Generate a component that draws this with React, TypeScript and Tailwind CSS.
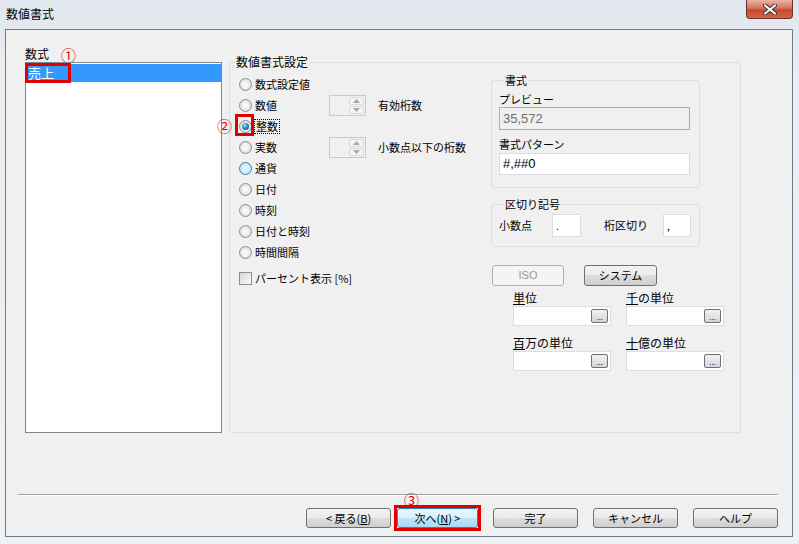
import type { ReactNode } from "react";

const jp = "font-['Noto_Sans_CJK_JP','Liberation_Sans',sans-serif]";

function Radio({ checked = false, hover = false }: { checked?: boolean; hover?: boolean }) {
  return (
    <span
      className={`flex h-[13px] w-[13px] shrink-0 items-center justify-center rounded-full border ${
        hover
          ? "border-[#3c7fb1] bg-[radial-gradient(circle_at_50%_50%,#e2f4fd_25%,#a9dcf6_100%)]"
          : "border-[#8e8f8f] bg-[radial-gradient(circle_at_50%_50%,#f7f7f7_25%,#cfcfcf_100%)]"
      }`}
    >
      {checked && (
        <span className="h-[7px] w-[7px] rounded-full bg-[radial-gradient(circle_at_40%_35%,#a6e4ff_0%,#2a8ad2_45%,#0b3f78_100%)]" />
      )}
    </span>
  );
}

function Btn({
  children,
  className = "",
  variant = "normal",
}: {
  children: ReactNode;
  className?: string;
  variant?: "normal" | "default" | "disabled";
}) {
  const look =
    variant === "default"
      ? "border-[#3c7fb1] bg-[linear-gradient(180deg,#eaf6fd_0%,#d9f0fc_50%,#bee6fd_50%,#a7d9f5_100%)] text-black"
      : variant === "disabled"
        ? "border-[#adb2b5] bg-[#f4f4f4] text-[#9a9a9a]"
        : "border-[#707070] bg-[linear-gradient(180deg,#f2f2f2_0%,#ebebeb_50%,#dddddd_50%,#cfcfcf_100%)] text-black";
  return (
    <div className={`flex h-[20px] items-center justify-center rounded-[3px] border text-[11px] ${look} ${className}`}>
      {children}
    </div>
  );
}

function Spinner() {
  return (
    <div className="flex h-[21px] w-[37px] border border-[#cacaca] bg-[#f0f0f0]">
      <div className="flex-1" />
      <div className="flex w-[17px] flex-col gap-[1px] p-[1px]">
        {[0, 1].map((i) => (
          <div key={i} className="flex flex-1 items-center justify-center rounded-[2px] border border-[#d9d9d9] bg-[#f4f4f4]">
            <svg width="7" height="4" viewBox="0 0 7 4">
              <path d={i === 0 ? "M0 4 L3.5 0 L7 4 Z" : "M0 0 L3.5 4 L7 0 Z"} fill="#a8a8a8" />
            </svg>
          </div>
        ))}
      </div>
    </div>
  );
}

function UnitField({ label }: { label: ReactNode }) {
  return (
    <div className="flex w-[98px] flex-col">
      <div className="h-[14px] text-[12px] leading-[14px]">{label}</div>
      <div className="mt-[1px] flex h-[20px] items-center justify-end border border-[#dcdde3] bg-white pr-[2px]">
        <div className="flex h-[14px] w-[17px] items-end justify-center rounded-[2px] border border-[#707070] bg-[linear-gradient(180deg,#f2f2f2,#d4d4d4)] pb-[1px] text-[8px] leading-[8px] text-[#2a2a8a]">
          ...
        </div>
      </div>
    </div>
  );
}

const radios = ["数式設定値", "数値", "整数", "実数", "通貨", "日付", "時刻", "日付と時刻", "時間間隔"];

export default function App() {
  return (
    <div className={`flex h-[544px] w-[799px] flex-col overflow-hidden bg-[linear-gradient(180deg,#dfe6ed_0%,#e9edf1_12%,#eef1f4_100%)] text-black ${jp}`}>
      {/* title bar */}
      <div className="flex h-[29px] items-start">
        <div className="pl-[6px] pt-[6px] text-[12px] leading-[16px]">数値書式</div>
        <div className="ml-auto mr-[6px] flex h-[19px] w-[47px] items-center justify-center rounded-b-[4px] border border-t-0 border-[#6e3128] bg-[linear-gradient(180deg,#eab3a6_0%,#d8735c_45%,#c54a2e_55%,#d4644a_100%)]">
          <svg width="14" height="11" viewBox="0 0 14 11">
            <path d="M2 1.5 L12 9.5 M12 1.5 L2 9.5" stroke="#3a2a2a" strokeWidth="4" strokeLinecap="round" />
            <path d="M2 1.5 L12 9.5 M12 1.5 L2 9.5" stroke="#ffffff" strokeWidth="2.2" strokeLinecap="round" />
          </svg>
        </div>
      </div>

      {/* client area */}
      <div className="ml-[5px] flex h-[508px] w-[788px] flex-col border border-[#6d7b8a] bg-[#f0f0f0]">
        <div className="mt-[16px] flex gap-[7px] pl-[19px]">
          {/* left: list */}
          <div className="flex w-[197px] flex-col">
            <div className="flex h-[16px] items-center text-[12px] leading-[14px]">
              <span>数式</span>
              <span className="ml-[12px] text-[15px] leading-[15px] text-[#e00000]">①</span>
            </div>
            <div className="h-[371px] border border-[#828790] bg-white">
              <div className="relative mt-[1px] flex h-[18px] items-center bg-[#3399ff] pl-[2px] text-[13px] text-white">
                売上
                <span className="absolute left-[-1px] top-[-1px] h-[20px] w-[46px] border-[3px] border-[#e00000]" />
              </div>
            </div>
          </div>

          {/* right: group */}
          <fieldset className="mt-[9px] h-[378px] w-[512px] rounded-[3px] border border-[#d5dfe5]">
            <legend className="ml-[5px] px-[1px] text-[12px] leading-[14px]">数値書式設定</legend>
            <div className="flex pl-[9px] pt-[5px]">
              {/* column A */}
              <div className="flex w-[90px] flex-col text-[11px]">
                {radios.map((r, i) => (
                  <div key={r} className="relative flex h-[21px] items-center gap-[2px]">
                    <Radio checked={i === 2} hover={i === 4} />
                    {i === 2 ? (
                      <span className="border border-dotted border-black px-[1px] leading-[13px]">{r}</span>
                    ) : (
                      <span className="pl-[1px]">{r}</span>
                    )}
                    {i === 2 && (
                      <>
                        <span className="absolute left-[-4px] top-[-2px] h-[22px] w-[19px] border-[3px] border-[#e00000]" />
                        <span className="absolute left-[-22px] top-[2px] text-[15px] leading-[15px] text-[#e00000]">②</span>
                      </>
                    )}
                  </div>
                ))}
                <div className="mt-[5px] flex h-[20px] items-center gap-[3px] whitespace-nowrap">
                  <span className="block h-[13px] w-[13px] shrink-0 border border-[#8e8f8f] bg-[linear-gradient(135deg,#d6d6d6,#fbfbfb)]" />
                  パーセント表示 [%]
                </div>
              </div>

              {/* column B */}
              <div className="flex w-[162px] flex-col text-[11px]">
                <div className="h-[21px]" />
                <div className="flex h-[21px] items-center">
                  <Spinner />
                  <span className="ml-[12px]">有効桁数</span>
                </div>
                <div className="h-[21px]" />
                <div className="flex h-[21px] items-center whitespace-nowrap">
                  <Spinner />
                  <span className="ml-[12px]">小数点以下の桁数</span>
                </div>
              </div>

              {/* column C */}
              <div className="flex w-[232px] flex-col text-[11px]">
                <fieldset className="w-[209px] rounded-[3px] border border-[#d5dfe5] pb-[12px] pl-[7px]">
                  <legend className="ml-[5px] px-[1px] text-[11px] leading-[12px]">書式</legend>
                  <div className="mt-[6px] h-[14px] leading-[14px]">プレビュー</div>
                  <div className="mt-[1px] flex h-[23px] w-[191px] items-center border border-[#adadad] bg-[#f0f0f0] pl-[3px] font-['Liberation_Sans',sans-serif] text-[13px] text-[#6d6d6d]">
                    35,572
                  </div>
                  <div className="mt-[7px] h-[14px] leading-[14px]">書式パターン</div>
                  <div className="mt-[2px] flex h-[22px] w-[191px] items-center border border-[#dcdde3] bg-white pl-[3px] font-['Liberation_Sans',sans-serif] text-[13px]">
                    #,##0
                  </div>
                </fieldset>

                <fieldset className="mt-[10px] w-[209px] rounded-[3px] border border-[#d5dfe5] pb-[9px] pl-[7px]">
                  <legend className="ml-[5px] px-[1px] text-[11px] leading-[12px]">区切り記号</legend>
                  <div className="mt-[4px] flex h-[23px] items-center">
                    <span className="w-[53px]">小数点</span>
                    <div className="flex h-[23px] w-[29px] items-center border border-[#dcdde3] bg-white pl-[3px] text-[10px]">.</div>
                    <span className="ml-[23px] w-[59px]">桁区切り</span>
                    <div className="flex h-[23px] w-[28px] items-center border border-[#dcdde3] bg-white pl-[3px] text-[10px]">,</div>
                  </div>
                </fieldset>

                <div className="mt-[18px] flex">
                  <Btn variant="disabled" className="ml-[1px] h-[21px] w-[72px] font-['Liberation_Sans',sans-serif]">
                    ISO
                  </Btn>
                  <Btn className="ml-[20px] h-[21px] w-[73px]">システム</Btn>
                </div>

                <div className="ml-[22px] mt-[5px] grid w-[211px] grid-cols-[98px_98px] gap-x-[15px] gap-y-[10px]">
                  <UnitField label={<><span className="underline">単</span>位</>} />
                  <UnitField label={<><span className="underline">千</span>の単位</>} />
                  <UnitField label={<><span className="underline">百</span>万の単位</>} />
                  <UnitField label={<><span className="underline">十</span>億の単位</>} />
                </div>
              </div>
            </div>
          </fieldset>
        </div>

        {/* separator */}
        <div className="ml-[12px] mt-[61px] h-[2px] w-[760px] border-t border-b border-t-[#a0a0a0] border-b-white" />

        {/* buttons */}
        <div className="mt-[9px] flex h-[26px] items-center justify-end pr-[14px]">
          <Btn className="w-[85px]">
            &lt; 戻る(<span className="underline">B</span>)
          </Btn>
          <div className="relative ml-[3px] flex h-[26px] w-[87px] items-center border-[3px] border-[#e00000]">
            <Btn variant="default" className="w-full">
              次へ(<span className="underline">N</span>) &gt;
            </Btn>
            <span className="absolute left-[7px] top-[-16px] text-[15px] leading-[15px] text-[#e00000]">③</span>
          </div>
          <Btn className="ml-[12px] w-[85px]">完了</Btn>
          <Btn className="ml-[15px] w-[85px]">キャンセル</Btn>
          <Btn className="ml-[15px] w-[85px]">ヘルプ</Btn>
        </div>
      </div>
    </div>
  );
}
